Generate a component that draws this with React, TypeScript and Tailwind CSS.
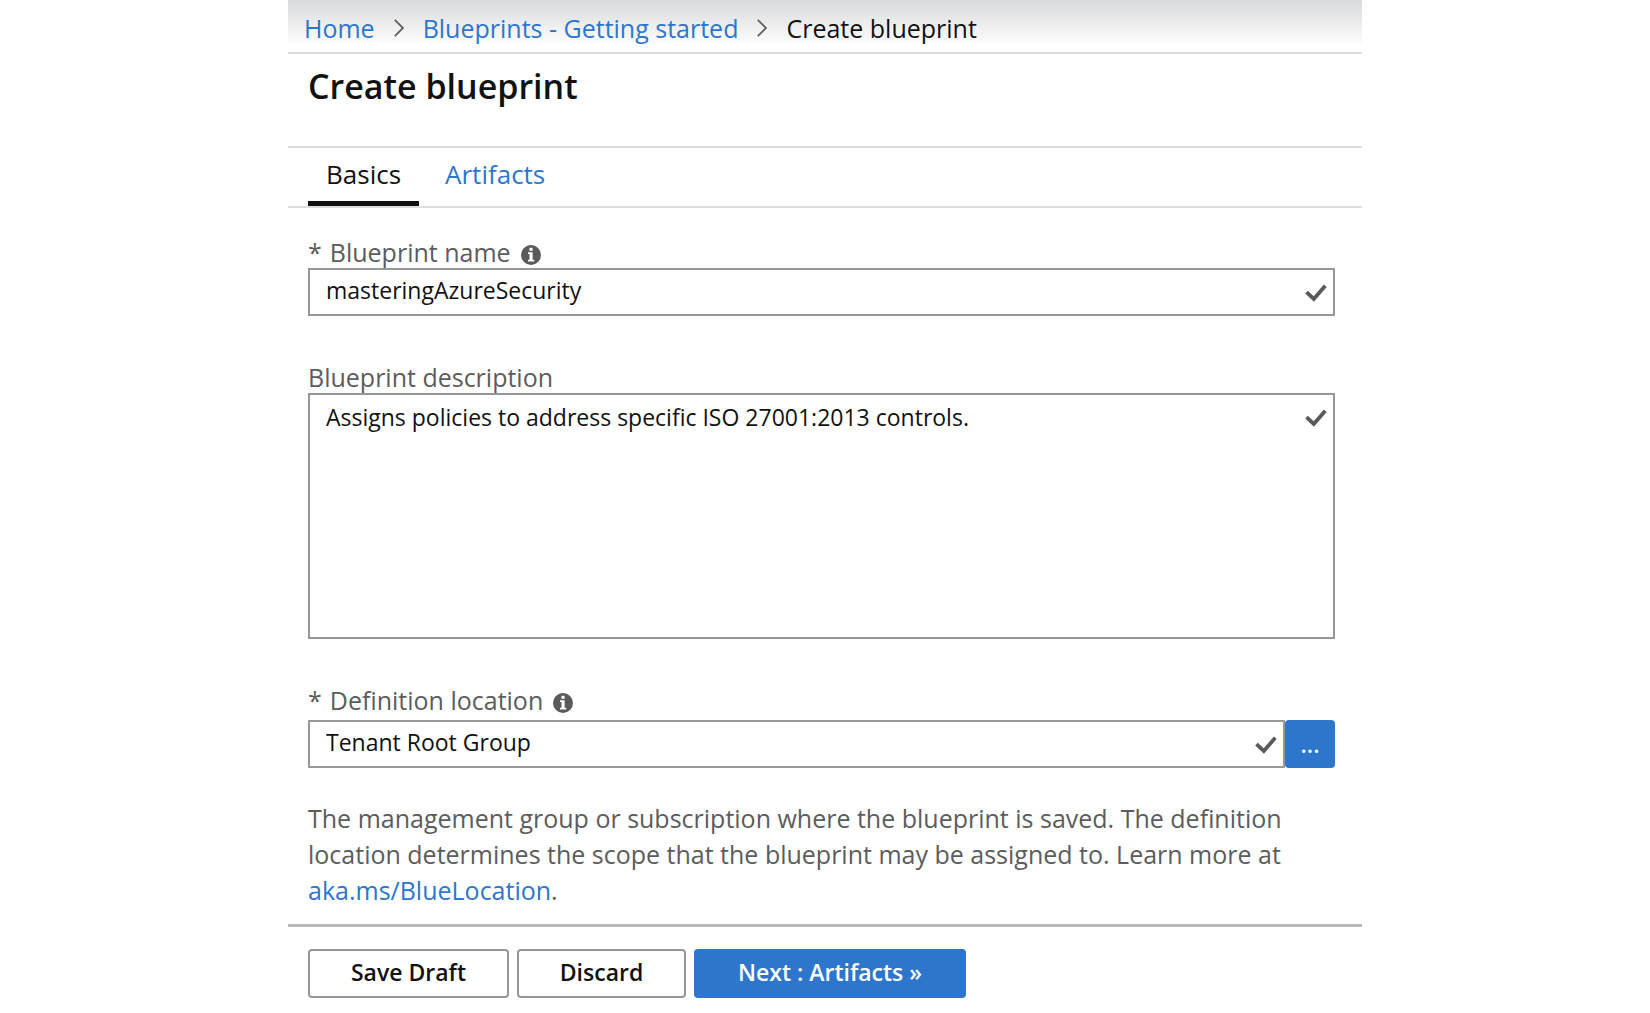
import { useState } from "react";

function InfoIcon() {
  return (
    <svg viewBox="0 0 20 20" className="mt-1.5 h-5 w-5 shrink-0" aria-hidden="true">
      <circle cx="10" cy="10" r="10" fill="#5a5a5a" />
      <rect x="8.4" y="2.8" width="3.2" height="3" fill="#fff" />
      <path d="M7 7.3h4.6v7.5h1.6v1.8H7v-1.8h1.5V9.1H7z" fill="#fff" />
    </svg>
  );
}

function CheckMark() {
  return (
    <svg viewBox="0 0 22 18" className="h-[18px] w-[22px]" aria-hidden="true">
      <path d="M1.5 8.2l7.3 6.8L20.3 1.8" fill="none" stroke="#5a5a5a" strokeWidth="3.8" />
    </svg>
  );
}

function Chevron() {
  return (
    <svg viewBox="0 0 10 18" className="h-[18px] w-[10px]" aria-hidden="true">
      <path d="M0.8 0.8L9 9L0.8 17.2" fill="none" stroke="#5f5f5f" strokeWidth="1.8" />
    </svg>
  );
}

const labelClass = "flex items-center text-[25px] leading-8 text-[#5c5c5c]";
const fieldClass =
  "block w-full border-2 border-[#95979b] bg-white pl-4 pr-12 text-[23px] text-[#111] outline-none";

export default function App() {
  const [name, setName] = useState("masteringAzureSecurity");
  const [description, setDescription] = useState(
    "Assigns policies to address specific ISO 27001:2013 controls.",
  );
  const [location, setLocation] = useState("Tenant Root Group");

  return (
    <div className="min-h-screen bg-white font-['Open_Sans','Noto_Sans',sans-serif] text-[#111]">
      <main className="mx-auto max-w-[1074px]">
        <nav
          aria-label="Breadcrumb"
          className="border-b-2 border-[#dcdedf] bg-linear-to-b from-[#d9dadc] to-white to-90% px-4 pt-3 pb-2 text-[25px] leading-8"
        >
          <ol className="flex items-center gap-[19px]">
            <li>
              <a href="#home" className="text-[#2e76cc]">Home</a>
            </li>
            <li><Chevron /></li>
            <li>
              <a href="#blueprints" className="text-[#2e76cc]">Blueprints - Getting started</a>
            </li>
            <li><Chevron /></li>
            <li aria-current="page">Create blueprint</li>
          </ol>
        </nav>

        <h1 className="border-b-2 border-[#dcdedf] px-5 pt-2 pb-9 text-[34px] leading-12 font-semibold">
          Create blueprint
        </h1>

        <div role="tablist" className="flex border-b-2 border-[#dcdedf] px-5 text-[26px] leading-10">
          <button
            role="tab"
            aria-selected="true"
            className="border-b-[5px] border-[#111] px-[18px] pt-[6px] pb-[7px]"
          >
            Basics
          </button>
          <button
            role="tab"
            aria-selected="false"
            className="border-b-[5px] border-transparent px-[26px] pt-[6px] pb-[7px] text-[#2e76cc]"
          >
            Artifacts
          </button>
        </div>

        <form className="pr-[27px] pl-5" onSubmit={(e) => e.preventDefault()}>
          <div className="pt-7">
            <label htmlFor="name" className={labelClass}>
              <span className="mr-2">*</span>
              <span className="mr-2.5">Blueprint name</span>
              <InfoIcon />
            </label>
            <div className="relative">
              <input
                id="name"
                type="text"
                value={name}
                onChange={(e) => setName(e.target.value)}
                className={`${fieldClass} h-12 pb-1`}
              />
              <span className="absolute top-4 right-2">
                <CheckMark />
              </span>
            </div>
          </div>

          <div className="pt-[45px]">
            <label htmlFor="description" className={labelClass}>
              Blueprint description
            </label>
            <div className="relative">
              <textarea
                id="description"
                value={description}
                onChange={(e) => setDescription(e.target.value)}
                className={`${fieldClass} h-[246px] resize-none pt-1.5 leading-8`}
              />
              <span className="absolute top-4 right-2">
                <CheckMark />
              </span>
            </div>
          </div>

          <div className="pt-[45px]">
            <label htmlFor="location" className={`${labelClass} pb-1`}>
              <span className="mr-2">*</span>
              <span className="mr-2.5">Definition location</span>
              <InfoIcon />
            </label>
            <div className="flex">
              <div className="relative flex-1">
                <input
                  id="location"
                  type="text"
                  value={location}
                  onChange={(e) => setLocation(e.target.value)}
                  className={`${fieldClass} h-12 pb-1`}
                />
                <span className="absolute top-4 right-2">
                  <CheckMark />
                </span>
              </div>
              <button
                type="button"
                aria-label="Browse locations"
                className="h-12 w-[50px] rounded-[4px] bg-[#2e76cc] text-[23px] leading-8 font-semibold text-white"
              >
                ...
              </button>
            </div>
          </div>

          <p className="pt-8 pb-4 text-[25px] leading-9 text-[#5c5c5c]">
            The management group or subscription where the blueprint is saved. The definition
            location determines the scope that the blueprint may be assigned to. Learn more at{" "}
            <a href="#location" className="text-[#2e76cc]">aka.ms/BlueLocation</a>.
          </p>
        </form>

        <footer className="flex gap-2 border-t-[3px] border-[#b9babf] px-5 pt-[22px] text-[23px] font-semibold">
          <button className="h-[49px] w-[201px] rounded-[4px] border-2 border-[#95979b] pb-0.5">
            Save Draft
          </button>
          <button className="h-[49px] w-[169px] rounded-[4px] border-2 border-[#95979b] pb-0.5">
            Discard
          </button>
          <button className="h-[49px] w-[272px] rounded-[4px] bg-[#2e76cc] pb-0.5 text-white">
            Next : Artifacts »
          </button>
        </footer>
      </main>
    </div>
  );
}
